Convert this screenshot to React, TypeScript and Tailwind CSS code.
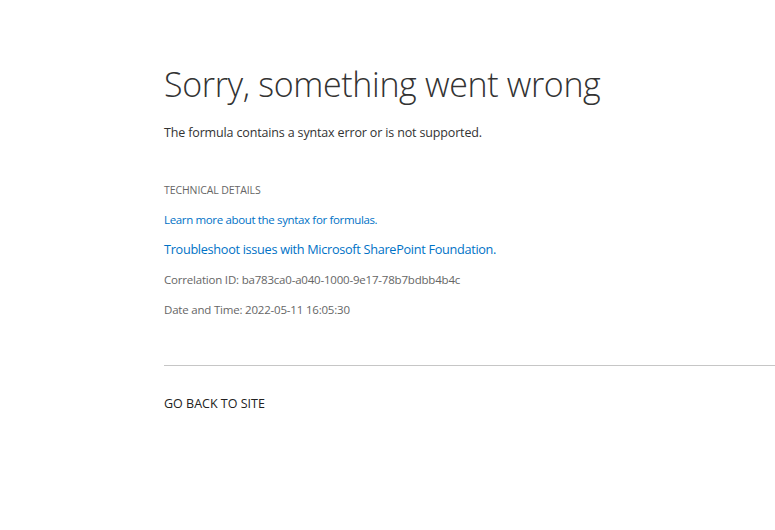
export default function App() {
  return (
    <div
      className="min-h-[530px] bg-white pl-[164px] pt-[61px]"
      style={{ fontFamily: '"Open Sans", "Noto Sans", sans-serif' }}
    >
      <h1 className="text-[34px] leading-[46px] font-light text-[#333] tracking-[-0.35px]">
        Sorry, something went wrong
      </h1>

      <p className="mt-[17px] text-[12.5px] leading-[18px] text-[#333] tracking-[-0.15px]">
        The formula contains a syntax error or is not supported.
      </p>

      <div className="mt-[41px] text-[10.5px] leading-[14px] text-[#666] uppercase tracking-[-0.1px]">
        Technical Details
      </div>

      <div className="mt-[15px] flex flex-col">
        <a href="#" className="text-[11.5px] leading-[16px] text-[#0072c6] tracking-[-0.35px]">
          Learn more about the syntax for formulas.
        </a>
        <a href="#" className="mt-[12px] text-[12.7px] leading-[18px] text-[#0072c6] tracking-[-0.3px]">
          Troubleshoot issues with Microsoft SharePoint Foundation.
        </a>
        <div className="mt-[14px] text-[11.5px] leading-[16px] text-[#666] tracking-[-0.2px]">
          Correlation ID: ba783ca0-a040-1000-9e17-78b7bdbb4b4c
        </div>
        <div className="mt-[14px] text-[11.5px] leading-[16px] text-[#666] tracking-[-0.2px]">
          Date and Time: 2022-05-11 16:05:30
        </div>
      </div>

      <div className="mt-[47px] border-t border-[#c6c6c6]" />

      <a href="#" className="mt-[30px] block text-[12.5px] leading-[16px] text-[#222] uppercase tracking-[0px]">
        Go back to site
      </a>
    </div>
  )
}
